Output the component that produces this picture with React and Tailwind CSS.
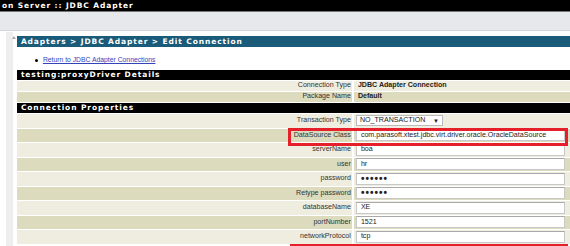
import React from "react";

const hdr = "font-['DejaVu_Sans',sans-serif] font-bold text-white text-[7.5px] tracking-[0.9px] leading-none";
const body = "font-['Liberation_Sans',Arial,sans-serif] text-[7.1px] leading-none";

const Bar = ({ children, color = "bg-black", h = "h-[11px]" }) => (
  <div className={`${h} ${color} flex items-center pl-[4px] ${hdr}`}>{children}</div>
);

const Row = ({ label, dark, short, children }) => (
  <div className={`flex ${short ? "h-[10px]" : "h-[13.5px]"} gap-[2px] ${body}`}>
    <div className={`w-[335px] flex items-center justify-end pr-[1px] text-[#333] ${dark ? "bg-[#dcdbbd]" : "bg-[#efeddf]"}`}>
      {label}
    </div>
    <div className={`flex-1 flex items-center pl-[2px] ${dark ? "bg-[#dcdbbd]" : "bg-[#efeddf]"}`}>{children}</div>
  </div>
);

const Field = ({ value, dots }) => (
  <div className="w-[209px] h-[12px] bg-white border border-[#c8c8c8] border-t-[#a9a9a9] flex items-center pl-[4px] text-[#222]">
    {dots ? <span className="text-[10px] tracking-[1px] font-bold">••••••</span> : value}
  </div>
);

const fields = [
  ["serverName", "boa"],
  ["user", "hr"],
  ["password", "", true],
  ["Retype password", "", true],
  ["databaseName", "XE"],
  ["portNumber", "1521"],
  ["networkProtocol", "tcp"],
];

export default function App() {
  return (
    <div className="relative w-[570px] h-[246px] overflow-hidden bg-white">
      <div className={`h-[11px] bg-black flex items-center pl-[2px] ${hdr}`}>on Server :: JDBC Adapter</div>
      <div className="h-[1px] bg-[#777]" />
      <div className="h-[19px] bg-[#e6e8ec] border-b border-[#d3d5d9]" />
      <div className="h-[1px] bg-white" />

      <div className="flex">
        <div className="ml-[6px] w-[7px] h-[220px] bg-[#eeeeee]" />
        <div className="w-[4px] relative">
          <svg className="absolute left-[-1px] top-[4px]" width="4" height="3" viewBox="0 0 4 3">
            <path d="M0 3 L2 0 L4 3 Z" fill="#aaa" />
          </svg>
        </div>
        <div className="w-[560px] pt-[4px]">
          <Bar color="bg-[#1a5b79]">Adapters &gt; JDBC Adapter &gt; Edit Connection</Bar>
          <div className={`h-[23px] flex items-center pl-[18px] pt-[4px] ${body}`}>
            <span className="w-[3px] h-[3px] rounded-full bg-black mr-[5px]" />
            <a className="text-[#3344bb] underline text-[6.8px]">Return to JDBC Adapter Connections</a>
          </div>
          <Bar h="h-[10px]">testing:proxyDriver Details</Bar>
          <div className="flex flex-col gap-[1px] pt-[1px]">
            <Row label="Connection Type" short>
              <span className="font-bold text-[#222] pl-[2px]">JDBC Adapter Connection</span>
            </Row>
            <Row label="Package Name" dark short>
              <span className="font-bold text-[#222] pl-[2px]">Default</span>
            </Row>
            <Bar h="h-[10px]">Connection Properties</Bar>
            <Row label="Transaction Type">
              <div className="w-[87px] h-[11px] bg-white border border-[#bbb] flex items-center justify-between pl-[3px] pr-[3px] text-[#222]">
                <span>NO_TRANSACTION</span>
                <span className="text-[6px]">▼</span>
              </div>
            </Row>
            <Row label="DataSource Class" dark>
              <Field value="com.parasoft.xtest.jdbc.virt.driver.oracle.OracleDataSource" />
            </Row>
            {fields.map(([l, v, d], i) => (
              <Row key={l} label={l} dark={i % 2 === 1}>
                <Field value={v} dots={d} />
              </Row>
            ))}
          </div>
        </div>
      </div>

      <div className="absolute left-[288px] top-[128px] w-[280px] h-[18px] border-[3px] border-[#e5202b]" />
      <div className="absolute left-[290px] top-[244px] w-[278px] h-[10px] border-[3px] border-[#e5202b]" />
    </div>
  );
}
